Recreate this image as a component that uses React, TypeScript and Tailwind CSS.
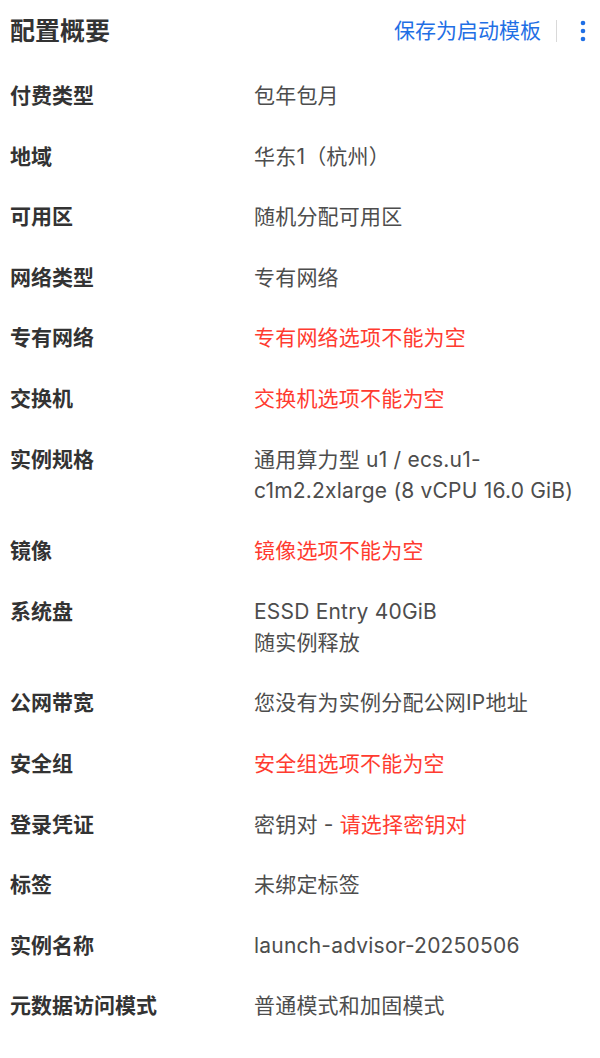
type Row = { label: string; value: React.ReactNode };

const red = "text-[#ff3b30]";

const rows: Row[] = [
  { label: "付费类型", value: "包年包月" },
  { label: "地域", value: "华东1（杭州）" },
  { label: "可用区", value: "随机分配可用区" },
  { label: "网络类型", value: "专有网络" },
  { label: "专有网络", value: <span className={red}>专有网络选项不能为空</span> },
  { label: "交换机", value: <span className={red}>交换机选项不能为空</span> },
  {
    label: "实例规格",
    value: (
      <>
        通用算力型 u1 / ecs.u1-
        <br />
        c1m2.2xlarge (8 vCPU 16.0 GiB)
      </>
    ),
  },
  { label: "镜像", value: <span className={red}>镜像选项不能为空</span> },
  {
    label: "系统盘",
    value: (
      <>
        ESSD Entry 40GiB
        <br />
        随实例释放
      </>
    ),
  },
  { label: "公网带宽", value: "您没有为实例分配公网IP地址" },
  { label: "安全组", value: <span className={red}>安全组选项不能为空</span> },
  {
    label: "登录凭证",
    value: (
      <>
        密钥对 - <span className={red}>请选择密钥对</span>
      </>
    ),
  },
  { label: "标签", value: "未绑定标签" },
  { label: "实例名称", value: "launch-advisor-20250506" },
  { label: "元数据访问模式", value: "普通模式和加固模式" },
];

export default function App() {
  return (
    <div
      className="min-h-screen bg-white pl-[10px] pr-[14px] pt-[13px]"
      style={{ fontFamily: 'Inter, "Noto Sans CJK SC", sans-serif' }}
    >
      <div className="flex items-center justify-between">
        <h1 className="text-[25px] leading-[36px] font-bold text-[#333]">配置概要</h1>
        <div className="flex items-center">
          <span className="text-[21px] leading-[36px] text-[#1f6fe5]">保存为启动模板</span>
          <span className="ml-[15px] h-[22px] w-px bg-[#d9d9d9]" />
          <svg className="ml-[23px]" width="6" height="22" viewBox="0 0 6 22" fill="#1f6fe5">
            <circle cx="3" cy="3" r="2.3" />
            <circle cx="3" cy="11" r="2.3" />
            <circle cx="3" cy="19" r="2.3" />
          </svg>
        </div>
      </div>

      <div className="mt-[31px] grid grid-cols-[244px_1fr] gap-y-[29.6px] text-[21px] leading-[31px]">
        {rows.map((r) => (
          <div key={r.label} className="contents">
            <div className="font-semibold text-[#333]">{r.label}</div>
            <div className="text-[#4d4d4d] tracking-[0.2px]">{r.value}</div>
          </div>
        ))}
      </div>
    </div>
  );
}
